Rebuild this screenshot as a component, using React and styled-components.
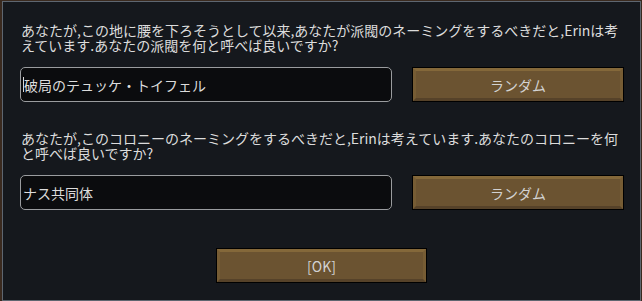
import React from "react";
import styled, { createGlobalStyle } from "styled-components";

const Global = createGlobalStyle`
  html, body { margin: 0; padding: 0; }
  body {
    background: #3a2a1f;
    width: 642px;
    height: 301px;
    overflow: hidden;
    font-family: "Noto Sans CJK JP", "Noto Sans", sans-serif;
  }
`;

const Panel = styled.div`
  box-sizing: border-box;
  margin: 1px 0 0 2px;
  width: 639px;
  height: 300px;
  background: #15181d;
  border: 1px solid #5e6670;
  padding: 21px 16px 0 17px;
  display: flex;
  flex-direction: column;
`;

const Section = styled.div`
  display: flex;
  flex-direction: column;
  margin-bottom: ${(p) => p.$after}px;
`;

const Prompt = styled.p`
  margin: 0 -4px 14px 1px;
  font-size: 14px;
  line-height: 15px;
  color: #dcdcdc;
  letter-spacing: 0;
`;

const Row = styled.div`
  display: flex;
  gap: 20px;
  align-items: flex-start;
`;

const Field = styled.div`
  box-sizing: border-box;
  width: 372px;
  height: 35px;
  background: #0b0c0e;
  border: 1px solid #9a9c9f;
  border-radius: 5px;
  display: flex;
  align-items: center;
  padding-left: 2px;
  font-size: 14px;
  color: #dcdcdc;
`;

const Caret = styled.span`
  display: inline-block;
  width: 1px;
  height: 15px;
  background: #d8d8d8;
`;

const BevelButton = styled.button`
  box-sizing: border-box;
  width: ${(p) => p.$w}px;
  height: 33px;
  padding: 0;
  margin: 1px;
  background: #6b5331;
  border-style: solid;
  border-width: 3px;
  border-color: #84683a #765c34 #564229 #765c34;
  box-shadow: 0 0 0 1px #000;
  font-family: "Noto Sans CJK JP", "Noto Sans", sans-serif;
  font-size: 14px;
  color: #d2d2d2;
  display: flex;
  align-items: center;
  justify-content: center;
  cursor: pointer;
`;

const Footer = styled.div`
  display: flex;
  justify-content: center;
  padding-right: 1px;
`;

export default function App() {
  return (
    <>
      <Global />
      <Panel>
        <Section $after={29}>
          <Prompt>
            あなたが,この地に腰を下ろそうとして以来,あなたが派閥のネーミングをするべきだと,Erinは考えています.あなたの派閥を何と呼べば良いですか?
          </Prompt>
          <Row>
            <Field>
              <Caret />
              破局のテュッケ・トイフェル
            </Field>
            <BevelButton $w={210}>ランダム</BevelButton>
          </Row>
        </Section>
        <Section $after={38}>
          <Prompt>
            あなたが,このコロニーのネーミングをするべきだと,Erinは考えています.あなたのコロニーを何と呼べば良いですか?
          </Prompt>
          <Row>
            <Field>ナス共同体</Field>
            <BevelButton $w={210}>ランダム</BevelButton>
          </Row>
        </Section>
        <Footer>
          <BevelButton $w={209}>[OK]</BevelButton>
        </Footer>
      </Panel>
    </>
  );
}
